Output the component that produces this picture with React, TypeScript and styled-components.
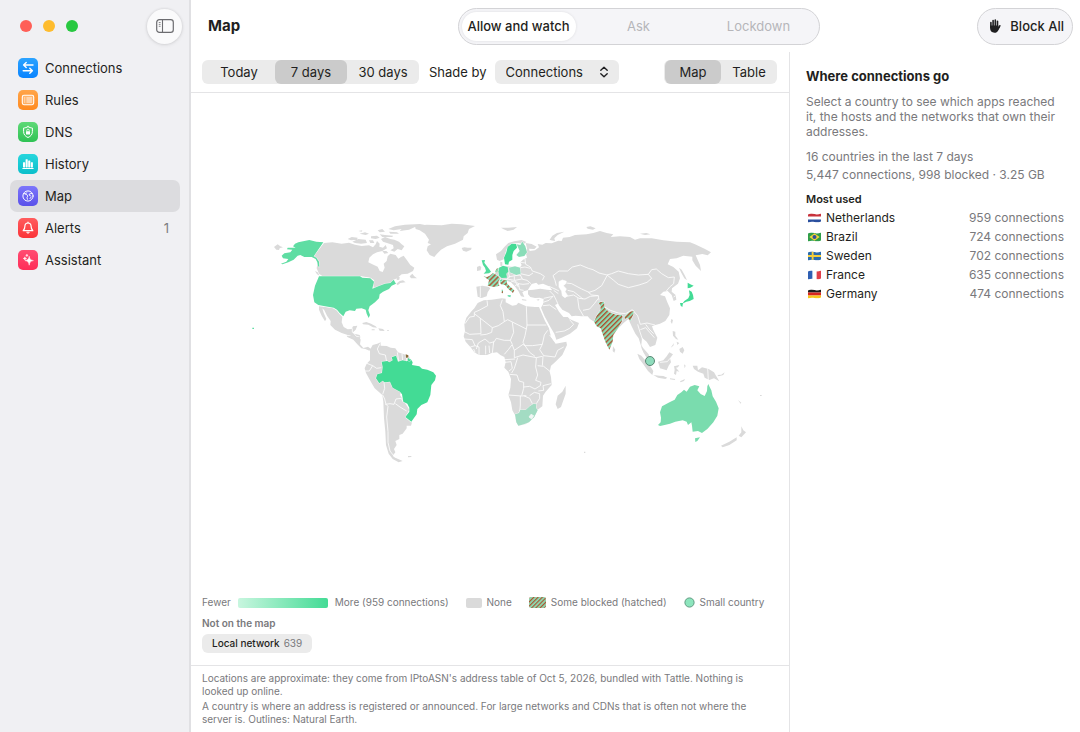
import React, { useState } from "react";
import styled, { createGlobalStyle } from "styled-components";

const GlobalStyle = createGlobalStyle`
  * { box-sizing: border-box; }
  body {
    margin: 0;
    background: #fff;
    color: #1f1f21;
    font-family: Inter, "Liberation Sans", sans-serif;
    font-size: 13px;
    line-height: 16px;
  }
  button, select { font: inherit; color: inherit; }
  h1, h2, h3, p, ul, dl { margin: 0; padding: 0; }
`;

/* ---------- layout ---------- */

const Shell = styled.div`
  display: flex;
  min-height: 100vh;
`;

const Sidebar = styled.aside`
  flex: 0 0 191px;
  background: #f0f0f3;
  border-right: 2px solid #e0e0e3;
`;

const WindowBar = styled.div`
  display: flex;
  align-items: center;
  justify-content: space-between;
  height: 52px;
  padding: 0 7px 0 20px;
`;

const Lights = styled.div`
  display: flex;
  gap: 11px;
`;

const Light = styled.span<{ $color: string }>`
  width: 12px;
  height: 12px;
  border-radius: 50%;
  background: ${(p) => p.$color};
`;

const ToggleButton = styled.button`
  display: grid;
  place-items: center;
  width: 35px;
  height: 35px;
  padding: 0;
  border: 0;
  border-radius: 50%;
  background: #fafafb;
  box-shadow: 0 0 2px 1px rgba(0, 0, 0, 0.06), 0 1px 4px rgba(0, 0, 0, 0.08);
`;

const NavList = styled.ul`
  list-style: none;
  && { padding: 0 9px 0 10px; }
`;

const NavLink = styled.a<{ $active?: boolean }>`
  display: flex;
  align-items: center;
  gap: 7px;
  height: 32px;
  padding: 0 11px 0 8px;
  border-radius: 7px;
  background: ${(p) => (p.$active ? "#dcdcdf" : "transparent")};
  color: inherit;
  text-decoration: none;
`;

const NavBadge = styled.span`
  margin-left: auto;
  color: #7c7c80;
`;

const IconTile = styled.span<{ $from: string; $to: string }>`
  display: grid;
  place-items: center;
  width: 20px;
  height: 20px;
  border-radius: 5px;
  background: linear-gradient(${(p) => p.$from}, ${(p) => p.$to});
`;

const Main = styled.div`
  flex: 1;
  min-width: 0;
  display: flex;
  flex-direction: column;
`;

const Header = styled.header`
  display: grid;
  grid-template-columns: 1fr auto 1fr;
  align-items: center;
  height: 52px;
  padding: 0 7px 0 13px;
`;

const Title = styled.h1`
  padding-left: 4px;
  font-size: 15px;
  line-height: 20px;
  font-weight: 700;
`;

const ModePill = styled.div`
  display: grid;
  grid-template-columns: repeat(3, 120px);
  height: 37px;
  padding: 3px 0;
  border: 1px solid #d3d3d6;
  border-radius: 19px;
  background: #f5f5f8;
`;

const ModeButton = styled.button<{ $active: boolean }>`
  margin: 0 3px;
  padding: 0;
  border: 0;
  border-radius: 15px;
  background: ${(p) => (p.$active ? "#fff" : "transparent")};
  box-shadow: ${(p) => (p.$active ? "0 0 3px rgba(0, 0, 0, 0.1)" : "none")};
  color: ${(p) => (p.$active ? "#1f1f21" : "#b6b6ba")};
  font-weight: ${(p) => (p.$active ? 500 : 400)};
  white-space: nowrap;
`;

const BlockButton = styled.button`
  justify-self: end;
  display: flex;
  align-items: center;
  gap: 8px;
  height: 37px;
  padding: 0 8px 0 10px;
  border: 1px solid #d3d3d6;
  border-radius: 19px;
  background: #f5f5f8;
  font-weight: 500;
`;

const Body = styled.div`
  flex: 1;
  display: flex;
`;

const MapColumn = styled.main`
  flex: 1;
  min-width: 0;
  display: flex;
  flex-direction: column;
`;

const Toolbar = styled.div`
  display: flex;
  align-items: center;
  gap: 8px;
  height: 41px;
  padding: 0 12px 0 11px;
  border-bottom: 1px solid #e4e4e6;
`;

const Segments = styled.div<{ $end?: boolean }>`
  display: flex;
  margin-left: ${(p) => (p.$end ? "auto" : "0")};
  margin-right: ${(p) => (p.$end ? "0" : "2px")};
  padding-left: 1px;
  border-radius: 6px;
  background: #ebebeb;
`;

const Segment = styled.button<{ $active: boolean; $narrow?: boolean }>`
  width: ${(p) => (p.$narrow ? "56px" : "72px")};
  height: 24px;
  padding: 0;
  border: 0;
  border-radius: 6px;
  background: ${(p) => (p.$active ? "#cbcbcb" : "transparent")};
`;

const SelectWrap = styled.span`
  position: relative;
  display: flex;
`;

const Select = styled.select`
  appearance: none;
  width: 124px;
  height: 24px;
  padding: 0 24px 0 11px;
  border: 0;
  border-radius: 6px;
  background: #ebebeb;
`;

const Chevrons = styled.svg`
  position: absolute;
  right: 10px;
  top: 6px;
  pointer-events: none;
`;

const MapArea = styled.div`
  flex: 1;
  display: flex;
  align-items: center;
  padding: 0 12px 0 11px;
  svg { display: block; width: 100%; }
`;

const LegendBlock = styled.section`
  padding: 5px 12px 12px 11px;
  color: #79797c;
  font-size: 10px;
  line-height: 13px;
`;

const Legend = styled.div`
  display: flex;
  flex-wrap: wrap;
  gap: 17px;
`;

const LegendItem = styled.span<{ $wide?: boolean }>`
  display: flex;
  align-items: center;
  gap: ${(p) => (p.$wide ? "7px" : "5px")};
`;

const Ramp = styled.span`
  width: 90px;
  height: 10px;
  border-radius: 2px;
  background: linear-gradient(90deg, #c8f6df, #43db95);
`;

const NoneSwatch = styled.span`
  width: 16px;
  height: 10px;
  border-radius: 2px;
  background: #dadada;
`;

const OffMapTitle = styled.h3`
  margin: 8px 0 4px;
  font-size: 10px;
  line-height: 13px;
  font-weight: 600;
`;

const Chip = styled.button`
  display: flex;
  align-items: center;
  gap: 4px;
  height: 19px;
  padding: 0 10px;
  border: 0;
  border-radius: 6px;
  background: #ebebeb;
  color: #1f1f21;
  font-weight: 500;
  span { color: #79797c; font-weight: 400; }
`;

const Footnotes = styled.footer`
  display: grid;
  gap: 2px;
  padding: 6px 24px 6px 11px;
  border-top: 1px solid #e4e4e6;
  color: #79797c;
  font-size: 10px;
  line-height: 13px;
`;

const Detail = styled.aside`
  flex: 0 0 291px;
  padding: 16px;
  border-left: 1px solid #e4e4e6;
  color: #79797c;
  font-size: 12px;
  line-height: 15px;
`;

const DetailTitle = styled.h2`
  margin-bottom: 10px;
  color: #1f1f21;
  font-size: 13px;
  line-height: 16px;
  font-weight: 700;
`;

const Stats = styled.div`
  display: grid;
  gap: 3px;
  margin: 10px 0;
`;

const MostUsed = styled.h3`
  margin-bottom: 4px;
  color: #1f1f21;
  font-size: 11px;
  line-height: 14px;
  font-weight: 600;
`;

const CountryTable = styled.table`
  width: 100%;
  border-collapse: collapse;
  td, th { padding: 0 0 4px; font-weight: 400; }
  th { color: #1f1f21; text-align: left; }
  td { text-align: right; }
`;

const CountryName = styled.span`
  display: flex;
  align-items: center;
  gap: 5px;
  padding-left: 2px;
`;

/* ---------- icons ---------- */

const stroke = {
  fill: "none",
  stroke: "#fff",
  strokeWidth: 1.3,
  strokeLinecap: "round" as const,
  strokeLinejoin: "round" as const,
};

const glyphs: Record<string, React.ReactNode> = {
  Connections: (
    <g {...stroke} strokeWidth={1.4}>
      <path d="M15 7H5.6M8.2 4.5 5.6 7l2.6 2.5" />
      <path d="M5.2 12.8h9.2M11.8 10.3l2.6 2.5-2.6 2.5" />
    </g>
  ),
  Rules: (
    <g {...stroke} strokeWidth={1.1}>
      <rect x="4.3" y="5.3" width="11.4" height="9.4" rx="1.6" fill="#fff" fillOpacity=".25" />
      <path d="M6.5 8h.4M6.5 10h.4M6.5 12h.4M8.8 8h4.8M8.8 10h4.8M8.8 12h4.8" strokeWidth=".9" />
    </g>
  ),
  DNS: (
    <g {...stroke} strokeWidth={1}>
      <path d="M10 4.6c1.4.9 2.8 1.3 4.4 1.4v3.6c0 2.900-1.700 4.800-4.400 5.900-2.700-1.100-4.400-3-4.400-5.900V6C7.200 5.900 8.600 5.500 10 4.600Z" />
      <rect x="8" y="9.3" width="4" height="3.3" rx=".5" fill="#fff" stroke="none" />
      <path d="M8.8 9.3V8.4a1.200 1.200 0 0 1 2.400 0v.9" strokeWidth=".8" />
    </g>
  ),
  History: (
    <g fill="#fff">
      <rect x="5" y="8.2" width="2.1" height="5.2" rx=".4" />
      <rect x="7.6" y="5.2" width="2.1" height="8.2" rx=".4" />
      <rect x="10.2" y="6.6" width="2.1" height="6.8" rx=".4" />
      <rect x="12.8" y="8.2" width="2.1" height="5.2" rx=".4" />
      <rect x="4.3" y="14" width="11.4" height="1" rx=".5" />
    </g>
  ),
  Map: (
    <g {...stroke} strokeWidth={1}>
      <circle cx="10" cy="10" r="5.1" />
      <path d="M6 7.500c1.500.3 2 .2 3-.9M7 8l1.800.6 1 1.500-.8 1.200.4 2M14 7.500l-2.400.3-.6 1.200 1.500.8" strokeWidth=".9" />
      <path d="m12 12.600 1.200-1.600" strokeWidth=".9" />
    </g>
  ),
  Alerts: (
    <g {...stroke} strokeWidth={1.2}>
      <path d="M10 5c-2 0-3.100 1.400-3.100 3.200 0 2.600-.6 3.300-1.700 4.500h9.600c-1.100-1.200-1.700-1.900-1.700-4.500C13.100 6.400 12 5 10 5Z" />
      <path d="M10 4.200v.6" />
      <path d="M8.700 14.400a1.400 1.400 0 0 0 2.600 0Z" fill="#fff" strokeWidth=".6" />
    </g>
  ),
  Assistant: (
    <g fill="#fff" stroke="#fff" strokeWidth=".5" strokeLinejoin="round">
      <path d="M11.200 6.200c.5 3 1.200 3.700 4.200 4.400-3 .7-3.700 1.400-4.200 4.600-.5-3.200-1.200-3.900-4.200-4.600 3-.7 3.700-1.400 4.200-4.400Z" />
      <path d="M6.900 6.800c.2 1.200.5 1.500 1.700 1.700-1.200.2-1.500.5-1.700 1.700-.2-1.200-.5-1.500-1.700-1.700 1.200-.2 1.500-.5 1.700-1.700Z" />
      <path d="M8.900 4.200c.1.800.4 1.100 1.200 1.200-.8.1-1.100.4-1.200 1.200-.1-.8-.4-1.100-1.200-1.200.8-.1 1.100-.4 1.200-1.200Z" />
    </g>
  ),
};

const nav = [
  { label: "Connections", from: "#2ba3ff", to: "#0a84ff" },
  { label: "Rules", from: "#ffa54a", to: "#ff8a1f" },
  { label: "DNS", from: "#5fd977", to: "#2fc254" },
  { label: "History", from: "#27d6dd", to: "#0bbfcb" },
  { label: "Map", from: "#7d76fb", to: "#5a51ea" },
  { label: "Alerts", from: "#ff5c5e", to: "#fb3439", badge: "1" },
  { label: "Assistant", from: "#ff4d72", to: "#ff2d58" },
];

const SidebarIcon = () => (
  <svg width="18" height="14" viewBox="0 0 18 14" fill="none" stroke="#6c6c70" aria-hidden>
    <rect x=".7" y=".7" width="16.6" height="12.6" rx="2.6" strokeWidth="1.2" />
    <path d="M6.500 1v12" strokeWidth="1.1" />
    <path d="M2.800 3.500h1.800M2.800 5.400h1.800M2.800 7.300h1.800" strokeWidth=".8" />
  </svg>
);

const HandIcon = () => (
  <svg width="14" height="16" viewBox="0 0 14 16" aria-hidden>
    <g fill="none" stroke="#1f1f21" strokeWidth="1.6" strokeLinecap="round">
      <path d="M2.900 4.600v5M5.100 2.600v6M7.300 2v6M9.500 3.200v6" />
      <path d="M11.800 7.800 9.800 11" />
    </g>
    <path d="M2.100 7.500h8.200v2l1.100-1.400.7.600-1.900 3.800c-.8 1.500-2 2.300-3.700 2.300-2.900 0-4.400-1.900-4.400-4.700Z" fill="#1f1f21" />
  </svg>
);

const flags: Record<string, React.ReactNode> = {
  Netherlands: (
    <>
      <path fill="#fff" d="M0 0h14v10H0z" />
      <path fill="#c8323c" d="M0 0h14v3.300H0z" />
      <path fill="#2a4f9e" d="M0 6.700h14V10H0z" />
    </>
  ),
  Brazil: (
    <>
      <path fill="#2f9e4a" d="M0 0h14v10H0z" />
      <path fill="#f4d43a" d="m7 1 5.500 4L7 9 1.500 5Z" />
      <circle cx="7" cy="5" r="2.2" fill="#2d4f9b" />
    </>
  ),
  Sweden: (
    <>
      <path fill="#2a6cae" d="M0 0h14v10H0z" />
      <path fill="#f6cf3a" d="M4 0h2v10H4zM0 4h14v2H0z" />
    </>
  ),
  France: (
    <>
      <path fill="#fff" d="M0 0h14v10H0z" />
      <path fill="#2f5fb3" d="M0 0h4.700v10H0z" />
      <path fill="#e0404a" d="M9.300 0H14v10H9.300z" />
    </>
  ),
  Germany: (
    <>
      <path fill="#1c1c1c" d="M0 0h14v3.300H0z" />
      <path fill="#d8261f" d="M0 3.300h14v3.400H0z" />
      <path fill="#f8c81c" d="M0 6.700h14V10H0z" />
    </>
  ),
};

const waveEdge = "M0 1.200C3-.3 5 .2 7 .8s4.500.4 7-.6v8.600c-3 1.200-5 1-7 .5S3 8.600 0 9.800Z";

const Flag = ({ name }: { name: string }) => (
  <svg width="13" height="10" viewBox="0 0 14 10" aria-hidden>
    <clipPath id={`wave-${name}`}>
      <path d={waveEdge} />
    </clipPath>
    <g clipPath={`url(#wave-${name})`}>{flags[name]}</g>
  </svg>
);

/* ---------- world map ---------- */

type Shape = { d: string; fill?: string };
type Sheet = { name: string; x: number; y: number; land: string[]; borders: string; tinted: Shape[] };

const HATCH = "url(#hatch)";

/* Each sheet holds outlines measured from its own corner, three units to the pixel. */
const sheets: Sheet[] = [
  {
    name: "North America",
    x: 735,
    y: 645,
    land: [
      "M237 84 262 82 290 86 312 83 330 89 350 93 372 91 384 97 392 88 396 78 404 86 403 95 414 98 422 90 426 100 412 108 396 112 384 118 373 128 370 142 382 148 398 155 404 168 413 171 419 158 416 146 425 138 428 124 436 116 452 120 460 131 468 126 476 122 486 136 496 150 508 158 504 168 488 176 470 178 456 190 446 194 436 204 400 214 386 220 384 204 388 196 376 188 350 184 232 183 222 176 215 160 218 140 206 124Z",
      "M308 72 320 66 338 68 336 74 318 76ZM322 80 340 72 362 74 366 84 348 86 330 84ZM344 56 360 52 372 56 362 60ZM378 64 396 62 404 68 392 72 378 70ZM372 76 384 76 388 84 376 84ZM340 48 352 46 350 50Z",
      "M408 72 420 66 436 72 448 74 462 80 470 88 478 94 470 106 458 102 448 110 436 106 446 100 444 90 426 84 414 80ZM404 58 420 60 444 62 442 66 412 66ZM412 108 424 108 430 114 418 116Z",
      "M430 42 450 34 480 29 525 27 540 30 510 36 492 44 464 48 470 42 446 46ZM398 46 412 42 420 50 404 52ZM432 50 456 52 462 56 436 56Z",
      "M510 34 545 29 590 31 620 26 650 28 690 33 672 42 668 54 656 64 654 74 630 86 606 94 588 104 576 116 568 126 554 120 545 106 548 94 558 88 548 84 552 74 540 56 524 46 512 42Z",
      "M650 99 658 97 668 98 680 98 678 104 664 110 654 107Z",
      "M222 274 240 276 264 280 274 286 284 298 292 306 290 322 296 336 308 343 320 342 324 334 337 332 332 344 324 352 318 356 308 360 290 354 270 344 256 330 257 318 246 302 238 286 232 280 236 294 244 312 240 319 230 302 222 284Z",
      "M318 350 328 356 344 360 346 366 342 380 334 376 326 366 312 360Z",
      "M352 324 364 321 378 326 392 334 396 338 384 337 370 329 354 328ZM400 340 414 342 419 348 404 347ZM380 343h9v3h-9ZM426 346h6v2h-6Z",
      "M456 184 464 186 463 194 455 196ZM454 206 464 198 474 196 482 202 466 204 458 211ZM494 184 502 176 508 184 516 190 498 190Z",
      "M87 96 98 88 106 94 114 97 104 100 102 105 94 104ZM210 168 218 172 224 182 216 178Z",
    ],
    borders: "M322 340 322 352 M326 354 334 364 344 366",
    tinted: [
      {
        fill: "#5fdda3",
        d: "M235 82 214 80 193 75 178 78 160 82 150 86 144 94 152 98 128 98 126 103 142 104 136 112 118 115 110 122 114 130 130 132 124 140 108 146 112 148 130 142 146 134 158 122 166 120 178 126 200 126 212 132 217 142 219 154 223 156 222 140 214 128 206 124Z",
      },
      {
        fill: "#5fdda3",
        d: "M222 184 345 184 352 188 376 190 387 200 384 212 382 221 400 214 420 206 436 204 446 194 453 206 440 212 432 222 414 230 404 238 402 250 390 262 374 274 370 286 375 300 371 309 365 296 362 284 350 280 334 281 330 288 314 286 302 290 295 304 284 294 276 284 266 278 240 274 220 270 208 262 204 240 210 212Z",
      },
      { fill: "#5fdda3", d: "M22 338h5v4h-5Z" },
    ],
  },
  {
    name: "South America",
    x: 1020,
    y: 1005,
    land: [
      "M20 2 36 2 46 10 58 6 62 14 60 28 70 39 84 35 93 42 88 47 76 42 64 40 52 28 40 14 22 6Z",
      "M90 44 98 30 112 26 122 22 122 32 140 33 152 38 166 40 174 52 192 58 206 62 216 82 200 120 180 180 208 224 196 246 216 262 213 272 200 272 200 280 188 296 178 300 178 312 166 318 170 330 162 342 166 352 158 362 166 368 188 378 176 382 158 372 146 356 138 330 136 290 132 250 130 200 127 180 104 160 90 136 78 114 74 100 80 86 90 76Z",
      "M204 363 214 363 214 366 204 367Z",
    ],
    borders:
      "M120 26 112 42 118 56 136 60 140 80 M78 84 98 92 110 100 124 98 M98 92 88 108 76 108 M132 142 134 160 128 178 M128 180 134 192 138 208 144 214 140 246 144 290 144 322 150 348 164 366 174 368 M136 208 150 206 162 208 168 192 184 190 190 202 M166 206 180 216 200 228 M172 52 176 78 M186 56 188 78 M199 60 200 78 M196 246 214 262",
    tinted: [
      {
        fill: "#43db95",
        d: "M125 80 142 78 148 82 158 76 155 67 168 62 174 80 188 76 200 79 212 72 218 82 216 90 238 94 246 101 262 104 280 112 288 122 285 136 274 150 271 180 262 202 244 210 232 222 230 238 214 260 196 246 208 230 208 218 202 206 190 200 186 178 180 170 158 158 150 140 134 142 128 137 118 145 108 130 112 118 126 114 128 96Z",
      },
      { fill: "#8a6b3a", d: "M197 58 205 61 205 68 198 68Z" },
      { fill: "#43db95", d: "M204 68 211 75 209 80 203 76Z" },
    ],
  },
  {
    name: "Eurasia",
    x: 1365,
    y: 645,
    land: [
      "M126 134 123 118 138 108 148 96 160 84 178 79 200 75 214 81 206 87 190 84 170 87 154 104 150 120 148 132 134 138Z",
      "M212 84 230 87 245 95 238 102 222 101 224 108 240 106 252 97 248 87 262 89 272 84 290 85 310 77 320 78 324 68 344 66 360 60 395 58 415 54 435 48 455 54 475 58 467 66 495 64 525 66 540 74 555 70 590 70 625 76 665 80 705 82 720 88 750 102 768 112 758 121 742 117 722 121 735 150 738 168 722 152 712 136 712 125 685 122 665 130 645 132 638 148 655 156 671 170 675 190 669 206 659 214 651 220 650 230 662 240 664 254 656 258 650 240 638 228 625 230 615 240 630 244 637 262 645 280 643 300 631 318 615 326 601 330 591 334 595 345 607 368 601 390 585 396 575 380 561 368 559 390 573 414 585 430 577 430 561 402 551 370 541 356 531 336 520 312 505 325 480 350 440 340 417 320 405 312 398 304 380 304 362 302 350 304 342 294 322 284 308 266 300 270 312 290 325 306 338 306 344 312 352 316 372 324 366 340 345 356 320 368 304 374 298 356 284 332 268 302 258 278 264 268 266 252 254 248 240 249 226 246 219 238 219 226 236 224 256 221 276 224 292 226 282 214 264 206 250 209 244 203 230 207 224 216 218 226 208 228 202 232 208 246 198 244 190 228 178 212 168 202 158 198 146 196 130 200 118 206 116 180 132 160 150 154 196 156 200 150 196 142 204 134 216 128 212 112 216 100Z",
      "M64 215 82 212 100 215 106 220 98 232 95 244 80 249 68 245Z",
      "M66 156 74 152 79 156 77 166 66 168ZM136 140 142 142 142 154 136 152Z",
      "M138 38 160 38 186 36 176 44 158 48 146 43ZM284 74 292 62 306 54 328 50 308 60 298 70 300 78 288 76ZM394 36 406 34 422 40 414 44 398 41ZM555 56 574 54 586 58 570 60Z",
      "M672 158 680 164 690 182 696 196 688 190 678 172ZM649 312 654 315 651 327 647 320ZM200 252 214 254 214 257 202 256ZM244 254 254 252 250 257Z",
    ],
    borders:
      "M210 132 212 148 226 156 232 168 256 176 268 184 262 196 M304 212 300 196 294 182 312 168 338 168 352 156 376 150 400 160 414 164 432 174 456 180 470 176 490 168 520 176 550 180 580 178 590 164 604 162 620 176 640 188 658 186 656 206 644 216 634 228 M456 180 476 196 490 208 520 218 552 210 576 202 590 190 580 178 M334 204 350 206 380 222 402 232 420 226 440 212 456 182 M334 244 356 240 372 250 390 252 406 244 430 242 M338 226 356 230 384 252 M400 232 410 240 430 242 432 256 M368 250 372 280 386 304 M384 286 404 282 418 266 430 250 M449 276 466 286 490 294 512 296 532 284 548 302 556 328 576 324 600 330 M548 328 554 348 562 372 M556 344 572 338 584 352 598 368 M572 328 582 342 596 356 M284 228 296 240 304 256 310 270 M264 262 282 256 294 244 266 250 M264 272 284 270 304 284 M302 352 328 348 344 340 356 328 344 314 M282 214 300 222 312 228 M296 226 310 236 M662 242 656 246 M196 158 210 156 226 160 M196 176 222 182 234 174 M196 142 212 144 M160 172 164 186 156 192 178 196 M160 186 180 182 196 180 202 192 M178 184 178 196 190 206 204 208 222 206 M190 206 194 224 206 226 M180 196 200 192 216 196 228 206 M168 198 182 202 190 216 M132 190 142 196 156 194 M76 214 76 246 M180 212 192 206",
    tinted: [
      { fill: "#fff", d: "M312 200 322 195 334 199 332 206 325 212 334 222 330 230 338 242 330 248 322 242 320 228 312 216Z" },
      {
        fill: "#43db95",
        d: "M150 148 147 128 154 112 158 96 170 86 184 87 186 98 176 108 172 120 172 134 162 140 160 149Z",
      },
      { fill: "#8addb8", d: "M185 88 196 90 202 80 211 94 216 112 208 123 192 126 184 120 194 108Z" },
      { fill: "#52dc9d", d: "M80 136 90 135 88 143 96 154 104 164 108 170 102 175 86 176 93 168 90 158 84 150Z" },
      { fill: "#52dc9d", d: "M132 158 144 152 158 156 160 170 154 176 156 188 140 189 132 182 130 168Z" },
      { fill: "#93dfbf", d: "M162 158 180 154 195 158 197 176 184 180 164 172Z" },
      { fill: HATCH, d: "M86 184 96 186 104 182 114 174 128 182 135 190 130 200 133 212 118 216 98 212 102 196Z" },
      { fill: HATCH, d: "M120 170 125 161 131 159 129 168 123 173ZM140 224 144 224 144 235 140 234Z" },
      { fill: HATCH, d: "M134 202 142 196 157 195 155 204 164 214 178 226 174 234 160 222 150 210 138 208Z" },
      { fill: "#6cdcab", d: "M158 240 168 241 166 247 158 244ZM134 196 142 192 142 198 136 200Z" },
      {
        fill: HATCH,
        d: "M430 262 447 260 449 278 463 292 482 299 500 300 503 306 500 320 490 338 475 360 473 380 463 404 451 380 441 352 437 340 425 334 417 320 425 302 437 284 436 272Z",
      },
      { fill: HATCH, d: "M508 305 524 290 536 288 535 298 526 318 518 308 510 312Z" },
      {
        fill: "#43db95",
        d: "M698 203 706 208 716 212 706 218 698 220ZM702 226 710 230 714 240 716 252 704 258 694 260 682 266 688 258 700 250 704 240ZM675 264 684 264 682 276 677 272Z",
      },
    ],
  },
  {
    name: "Africa",
    x: 1365,
    y: 975,
    land: [
      "M68 -66 86 -74 110 -76 140 -80 152 -79 152 -68 172 -58 184 -60 190 -67 214 -56 240 -54 252 -54 258 -40 270 -12 282 10 288 36 302 56 334 50 336 60 322 90 300 112 288 122 284 140 288 156 290 180 272 200 264 212 262 244 248 254 236 278 214 297 190 302 183 290 180 270 172 256 168 232 160 210 166 188 168 162 160 140 148 128 152 112 148 96 136 90 126 82 110 84 96 90 72 90 58 82 48 68 32 50 26 34 30 18 28 -2 34 -22 50 -42 58 -50Z",
      "M332 182 332 206 318 246 308 252 302 238 308 212 322 200Z",
    ],
    borders:
      "M96 -74 98 -58 72 -44 58 -38 58 -26 44 -24 30 -4 M58 -34 84 -14 112 8 130 2 148 -10 144 -40 136 -58 142 -76 M214 -56 216 0 274 0 M148 -10 158 -16 214 12 216 0 M214 12 210 32 204 52 210 62 M112 8 110 22 94 28 76 30 M76 -20 78 26 44 28 28 20 M118 50 124 40 148 46 166 46 176 22 172 -8 M166 46 172 58 160 74 148 88 M172 60 178 76 204 58 210 62 232 62 262 58 268 30 278 16 M178 76 178 98 M262 58 254 74 266 92 300 96 308 76 326 66 M178 98 204 90 244 98 262 94 M210 62 224 82 240 94 M244 98 242 126 248 150 242 166 M248 122 266 124 286 140 M264 94 262 122 M170 144 178 130 188 98 M150 112 168 110 172 130 162 138 M150 104 180 102 M164 148 186 150 192 168 206 172 206 190 200 212 M160 210 200 213 214 212 M206 186 224 184 240 192 256 182 258 172 242 166 M288 176 264 182 266 196 250 198 M196 212 196 240 194 264 M206 212 224 220 232 236 M224 212 238 202 254 206 254 220 244 236 M72 66 72 90 M92 62 92 88 M102 62 104 84 M116 50 112 84 M64 72 70 54 90 42 104 54 118 50 M28 42 52 44 60 62 72 66 M46 66 60 62 M60 82 56 72 M284 30 300 50 M266 92 264 94",
    tinted: [
      {
        fill: "#a3dcc3",
        d: "M180 268 192 264 196 254 212 255 224 244 236 236 244 238 243 248 248 256 238 276 222 292 206 298 190 302 184 292Z",
      },
      { fill: "#f1f6f4", d: "M222 276 228 268 236 272 230 282Z" },
    ],
  },
  {
    name: "Oceania",
    x: 1710,
    y: 975,
    land: [
      "M202 86 214 92 226 106 236 116 250 138 247 150 234 138 220 118 208 102Z",
      "M214 66 222 72 236 88 240 102 230 98 220 82Z",
      "M250 150 268 152 280 153 292 158 286 162 264 158ZM300 160 316 162 314 165 300 163ZM330 169 345 162 342 168 332 172Z",
      "M264 110 280 106 290 94 298 82 309 88 300 100 303 112 296 122 290 136 270 130Z",
      "M312 124 328 120 324 127 318 128 328 140 320 138 318 150 312 146 314 134ZM342 118 347 122 344 130Z",
      "M308 18 316 20 316 32 325 44 318 42 309 32ZM302 68 312 54 310 62ZM320 50 328 54 322 60ZM328 72 338 66 343 76 338 86 330 80Z",
      "M368 122 382 122 384 136 396 127 416 132 432 142 438 152 448 169 432 160 418 165 404 158 400 146 384 140 372 132ZM442 150 454 149 464 142 460 150 446 154Z",
      "M129 64 136 74 133 83 128 78Z",
      "M514 304 520 316 528 322 514 337 506 332 514 322ZM500 337 500 346 478 360 458 367 453 362 478 350Z",
      "M504 225 514 233 512 236ZM570 210h5v3h-5ZM42 380h4v4h-4Z",
    ],
    borders: "M413 130 415 166 M270 112 292 110 300 100",
    tinted: [
      {
        fill: "#7adcae",
        d: "M264 300 272 292 273 278 270 262 276 244 300 231 314 224 322 210 334 202 342 194 350 200 360 185 374 180 388 184 382 196 392 207 404 213 411 198 412 184 415 177 419 186 424 196 428 214 438 230 446 250 442 272 430 292 412 312 396 324 384 318 368 320 366 302 364 292 354 300 350 290 338 286 316 290 300 296 284 300 270 303ZM375 340 390 337 382 348 376 351Z",
      },
    ],
  },
];

const HatchPattern = ({ id, size }: { id: string; size: number }) => (
  <pattern id={id} width={size} height={size} patternUnits="userSpaceOnUse" patternTransform="rotate(45)">
    <rect width={size} height={size} fill="#8be0b6" />
    <rect width={size * 0.4} height={size} fill="#ac5230" />
  </pattern>
);

const WorldMap = () => (
  <svg viewBox="606 606 1725 840" role="img" aria-label="Connections by country">
    <defs>
      <HatchPattern id="hatch" size={10.5} />
    </defs>
    {sheets.map((s) => (
      <g key={s.name} transform={`translate(${s.x} ${s.y})`} strokeLinejoin="round">
        <path d={s.land.join("")} fill="#dadada" />
        <path d={s.borders} fill="none" stroke="#fff" strokeWidth="2.4" />
        {s.tinted.map((t, i) => (
          <path key={i} d={t.d} fill={t.fill} stroke="#fff" strokeWidth="2" paintOrder="stroke" />
        ))}
      </g>
    ))}
    <circle cx="1950" cy="1083" r="13.5" fill="#8fdcbc" stroke="#5b8775" strokeWidth="3" />
  </svg>
);

/* ---------- page ---------- */

const modes = ["Allow and watch", "Ask", "Lockdown"];
const ranges = ["Today", "7 days", "30 days"];
const views = ["Map", "Table"];

const topCountries = [
  { name: "Netherlands", count: 959 },
  { name: "Brazil", count: 724 },
  { name: "Sweden", count: 702 },
  { name: "France", count: 635 },
  { name: "Germany", count: 474 },
];

export default function App() {
  const [mode, setMode] = useState(modes[0]);
  const [range, setRange] = useState(ranges[1]);
  const [view, setView] = useState(views[0]);

  return (
    <Shell>
      <GlobalStyle />
      <Sidebar>
        <WindowBar>
          <Lights>
            <Light $color="#ff5f57" />
            <Light $color="#febc2e" />
            <Light $color="#28c840" />
          </Lights>
          <ToggleButton aria-label="Toggle sidebar">
            <SidebarIcon />
          </ToggleButton>
        </WindowBar>
        <nav>
          <NavList>
            {nav.map((n) => (
              <li key={n.label}>
                <NavLink href="#" $active={n.label === "Map"}>
                  <IconTile $from={n.from} $to={n.to}>
                    <svg width="20" height="20" viewBox="0 0 20 20" aria-hidden>
                      {glyphs[n.label]}
                    </svg>
                  </IconTile>
                  {n.label}
                  {n.badge && <NavBadge>{n.badge}</NavBadge>}
                </NavLink>
              </li>
            ))}
          </NavList>
        </nav>
      </Sidebar>

      <Main>
        <Header>
          <Title>Map</Title>
          <ModePill role="group" aria-label="Mode">
            {modes.map((m) => (
              <ModeButton key={m} $active={m === mode} aria-pressed={m === mode} onClick={() => setMode(m)}>
                {m}
              </ModeButton>
            ))}
          </ModePill>
          <BlockButton>
            <HandIcon />
            Block All
          </BlockButton>
        </Header>

        <Body>
          <MapColumn>
            <Toolbar>
              <Segments role="group" aria-label="Period">
                {ranges.map((r) => (
                  <Segment key={r} $active={r === range} aria-pressed={r === range} onClick={() => setRange(r)}>
                    {r}
                  </Segment>
                ))}
              </Segments>
              <label htmlFor="shade">Shade by</label>
              <SelectWrap>
                <Select id="shade" defaultValue="Connections">
                  <option>Connections</option>
                </Select>
                <Chevrons width="10" height="12" viewBox="0 0 10 12" aria-hidden>
                  <path
                    d="M1.800 4.300 5 1.300l3.200 3M1.800 7.700l3.200 3 3.200-3"
                    fill="none"
                    stroke="#1f1f21"
                    strokeWidth="1.4"
                    strokeLinecap="round"
                    strokeLinejoin="round"
                  />
                </Chevrons>
              </SelectWrap>
              <Segments $end role="group" aria-label="View">
                {views.map((v) => (
                  <Segment key={v} $narrow $active={v === view} aria-pressed={v === view} onClick={() => setView(v)}>
                    {v}
                  </Segment>
                ))}
              </Segments>
            </Toolbar>

            <MapArea>
              <WorldMap />
            </MapArea>

            <LegendBlock>
              <Legend>
                <LegendItem $wide>
                  Fewer
                  <Ramp />
                  More (959 connections)
                </LegendItem>
                <LegendItem>
                  <NoneSwatch />
                  None
                </LegendItem>
                <LegendItem>
                  <svg width="17" height="11" viewBox="0 0 17 11" aria-hidden>
                    <defs>
                      <HatchPattern id="legend-hatch" size={3} />
                    </defs>
                    <rect width="17" height="11" rx="2" fill="url(#legend-hatch)" />
                  </svg>
                  Some blocked (hatched)
                </LegendItem>
                <LegendItem>
                  <svg width="11" height="11" viewBox="0 0 11 11" aria-hidden>
                    <circle cx="5.5" cy="5.5" r="4.6" fill="#8de5bd" stroke="#5f9a80" />
                  </svg>
                  Small country
                </LegendItem>
              </Legend>
              <OffMapTitle>Not on the map</OffMapTitle>
              <Chip>
                Local network <span>639</span>
              </Chip>
            </LegendBlock>

            <Footnotes>
              <p>
                Locations are approximate: they come from IPtoASN's address table of Oct 5, 2026, bundled with Tattle.
                Nothing is looked up online.
              </p>
              <p>
                A country is where an address is registered or announced. For large networks and CDNs that is often not
                where the server is. Outlines: Natural Earth.
              </p>
            </Footnotes>
          </MapColumn>

          <Detail>
            <DetailTitle>Where connections go</DetailTitle>
            <p>Select a country to see which apps reached it, the hosts and the networks that own their addresses.</p>
            <Stats>
              <p>16 countries in the last 7 days</p>
              <p>5,447 connections, 998 blocked · 3.25 GB</p>
            </Stats>
            <MostUsed>Most used</MostUsed>
            <CountryTable>
              <tbody>
                {topCountries.map((c) => (
                  <tr key={c.name}>
                    <th scope="row">
                      <CountryName>
                        <Flag name={c.name} />
                        {c.name}
                      </CountryName>
                    </th>
                    <td>{c.count} connections</td>
                  </tr>
                ))}
              </tbody>
            </CountryTable>
          </Detail>
        </Body>
      </Main>
    </Shell>
  );
}
